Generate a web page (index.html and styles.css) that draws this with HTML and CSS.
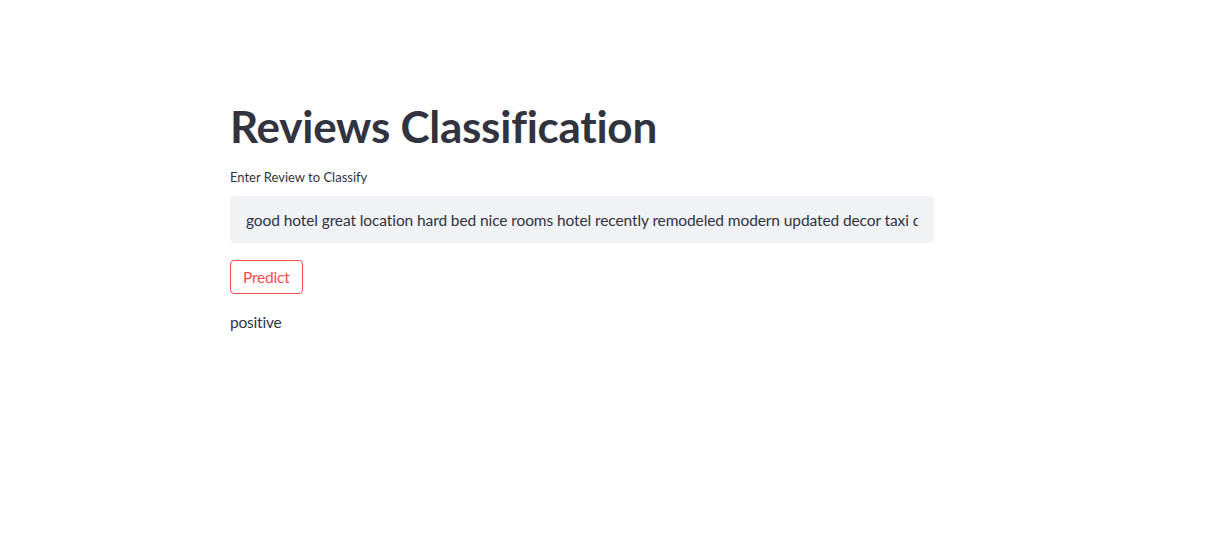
FILE: index.html
```html
<!DOCTYPE html>
<html>
<head>
<meta charset="utf-8">
<link rel="stylesheet" href="styles.css">
</head>
<body>
<main class="main">
  <div class="block">
    <h1 class="title">Reviews Classification</h1>
    <label class="label" for="review">Enter Review to Classify</label>
    <div class="input-wrap">
      <input id="review" class="input" type="text" value="good hotel great location hard bed nice rooms hotel recently remodeled modern updated decor taxi driver told us">
    </div>
    <button class="btn">Predict</button>
    <p class="result">positive</p>
  </div>
</main>
</body>
</html>
```
FILE: styles.css
```css
* { box-sizing: border-box; }
html, body {
  margin: 0;
  padding: 0;
  background: #ffffff;
  font-family: "Source Sans Pro", "Lato", "Noto Sans", sans-serif;
  color: rgb(49, 51, 63);
}
.main {
  display: flex;
  justify-content: center;
  padding: 95px 62px 0 0;
}
.block {
  width: 704px;
  display: flex;
  flex-direction: column;
  align-items: flex-start;
}
.title {
  margin: 0;
  font-size: 44px;
  font-weight: 700;
  line-height: 62px;
  letter-spacing: -0.25px;
  color: rgb(49, 51, 63);
}
.label {
  margin-top: 12px;
  font-size: 13px;
  line-height: 16px;
  color: rgb(49, 51, 63);
}
.input-wrap {
  margin-top: 11px;
  width: 100%;
  height: 47px;
  background: #f0f2f6;
  border-radius: 4px;
  display: flex;
  align-items: center;
  padding: 0 16px;
}
.input {
  width: 100%;
  border: none;
  outline: none;
  background: transparent;
  font-family: inherit;
  font-size: 15.5px;
  letter-spacing: -0.1px;
  color: rgb(49, 51, 63);
  padding: 0;
}
.btn {
  margin-top: 17px;
  height: 34px;
  padding: 0 12px;
  background: #ffffff;
  border: 1px solid rgb(255, 75, 75);
  border-radius: 4px;
  color: rgb(255, 75, 75);
  font-family: inherit;
  font-size: 15.5px;
  letter-spacing: -0.2px;
}
.result {
  margin: 16px 0 0;
  font-size: 15.5px;
  line-height: 24px;
  letter-spacing: -0.2px;
}
```
